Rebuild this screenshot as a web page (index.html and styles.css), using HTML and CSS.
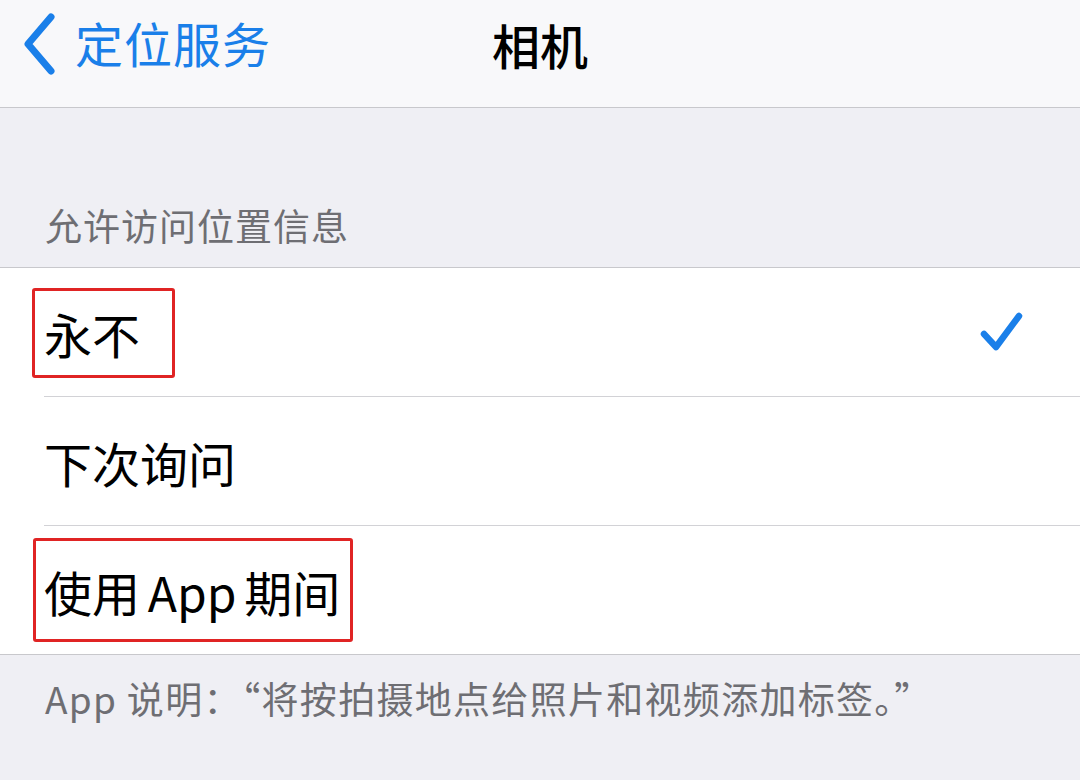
FILE: index.html
```html
<!DOCTYPE html>
<html lang="zh-CN">
<head>
<meta charset="utf-8">
<title>相机</title>
<link rel="stylesheet" href="styles.css">
</head>
<body>
<div class="screen">
  <header class="nav">
    <div class="back">
      <svg class="chev" width="40" height="70" viewBox="0 0 40 70"><polyline points="31,8 8,35 31,62" fill="none" stroke="#1a7fe9" stroke-width="7" stroke-linecap="round" stroke-linejoin="round"/></svg>
      <span class="back-label">定位服务</span>
    </div>
    <div class="title">相机</div>
  </header>
  <div class="section-header">允许访问位置信息</div>
  <ul class="list">
    <li class="row">
      <span class="label">永不</span>
      <svg class="check" width="50" height="46" viewBox="0 0 50 46"><polyline points="7,26 19,39 42,8" fill="none" stroke="#1a7fe9" stroke-width="6.5" stroke-linecap="round" stroke-linejoin="round"/></svg>
      <span class="mark mark-1"></span>
    </li>
    <li class="row">
      <span class="label">下次询问</span>
    </li>
    <li class="row last">
      <span class="label tight">使用 App 期间</span>
      <span class="mark mark-2"></span>
    </li>
  </ul>
  <div class="footer">App 说明：“将按拍摄地点给照片和视频添加标签。”</div>
</div>
</body>
</html>
```
FILE: styles.css
```css
html, body {
  margin: 0;
  padding: 0;
}
body {
  width: 1080px;
  height: 780px;
  overflow: hidden;
  background: #efeff4;
  font-family: "Noto Sans CJK SC", "Noto Sans", sans-serif;
}
.screen {
  width: 1080px;
  height: 780px;
  background: #efeff4;
}
.nav {
  position: relative;
  height: 107px;
  background: #f8f8fa;
  border-bottom: 1px solid #c8c8cc;
  display: flex;
  align-items: flex-start;
}
.back {
  display: flex;
  align-items: center;
  height: 84px;
  padding-left: 20px;
  gap: 15px;
}
.chev {
  display: block;
  margin-top: 4px;
}
.back-label {
  color: #1a7fe9;
  font-size: 48px;
  line-height: 84px;
  letter-spacing: 1px;
}
.title {
  position: absolute;
  left: 0;
  right: 0;
  top: 0;
  height: 88px;
  line-height: 88px;
  text-align: center;
  font-size: 48px;
  font-weight: 500;
  color: #000;
  pointer-events: none;
}
.section-header {
  height: 159px;
  box-sizing: border-box;
  padding: 0 45px 22px;
  display: flex;
  align-items: flex-end;
  font-size: 37px;
  line-height: 40px;
  color: #6e6e73;
  letter-spacing: 1px;
}
.list {
  list-style: none;
  margin: 0;
  padding: 0 0 0 44px;
  background: #fff;
  border-top: 1px solid #c8c8cc;
  border-bottom: 1px solid #c8c8cc;
}
.row {
  position: relative;
  height: 128px;
  display: flex;
  align-items: center;
  border-bottom: 1px solid #d2d2d6;
}
.row.last {
  border-bottom: none;
}
.label {
  font-size: 48px;
  color: #000;
  line-height: 60px;
  margin-top: 2px;
}
.label.tight {
  word-spacing: -3px;
}
.check {
  position: absolute;
  right: 53px;
  top: 40px;
}
.mark {
  position: absolute;
  border: 3px solid #e02424;
  border-radius: 3px;
  box-sizing: border-box;
}
.mark-1 {
  left: -12px;
  top: 20px;
  width: 143px;
  height: 90px;
}
.mark-2 {
  left: -11px;
  top: 12px;
  width: 320px;
  height: 104px;
}
.footer {
  padding: 20px 45px 0;
  font-size: 37px;
  line-height: 46px;
  color: #6e6e73;
  letter-spacing: 1.3px;
}
```
